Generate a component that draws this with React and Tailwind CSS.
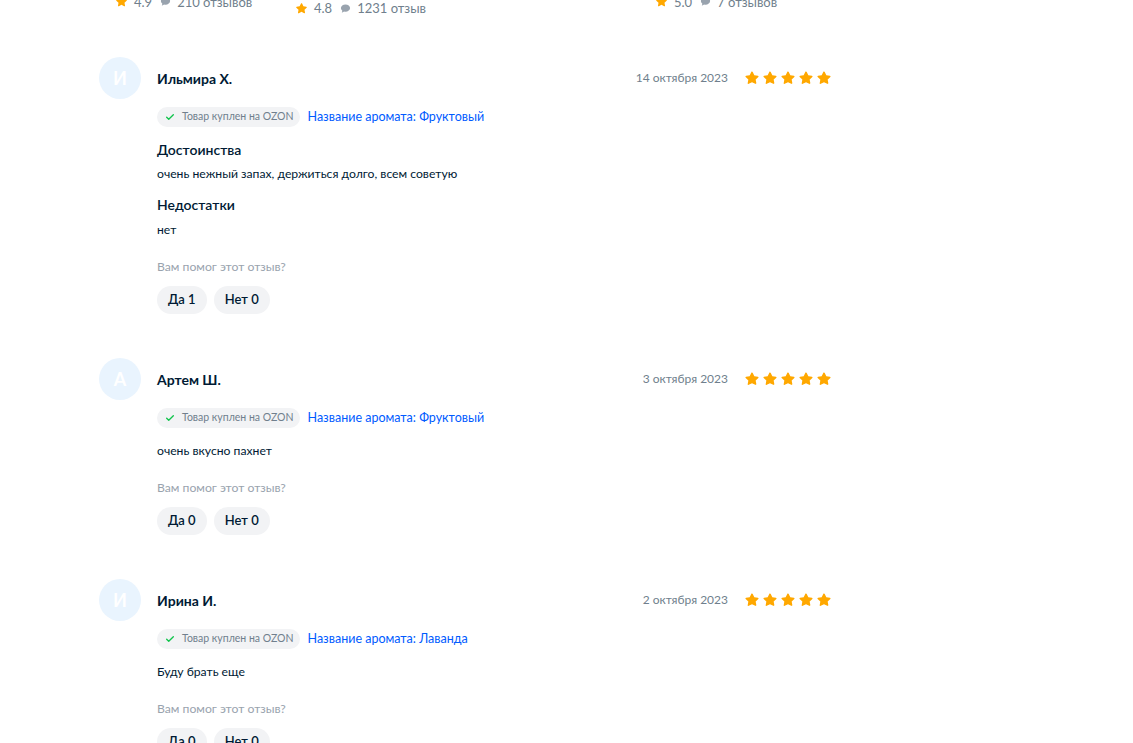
import React from 'react';

const Star = ({ size = 16 }) => (
  <svg width={size} height={size} viewBox="0 0 24 24" className="shrink-0">
    <path
      d="M12 2.2c.5 0 .9.3 1.1.7l2.4 5 5.4.7c.9.1 1.3 1.2.6 1.8l-4 3.8 1 5.4c.2.9-.8 1.6-1.6 1.1L12 18.2l-4.9 2.6c-.8.4-1.8-.2-1.6-1.1l1-5.4-4-3.8c-.7-.6-.3-1.7.6-1.8l5.4-.7 2.4-5c.2-.5.6-.7 1.1-.7z"
      fill="#ffa800"
    />
  </svg>
);

const Bubble = () => (
  <svg width="11" height="11" viewBox="0 0 24 24" className="shrink-0">
    <path d="M12 3C6.5 3 2 6.6 2 11c0 2.3 1.2 4.3 3.1 5.8L4 21l5-2.4c1 .3 2 .4 3 .4 5.5 0 10-3.6 10-8s-4.5-8-10-8z" fill="#99a3ae" />
  </svg>
);

const Check = () => (
  <svg width="10" height="10" viewBox="0 0 24 24" className="shrink-0">
    <path d="M4 12.5l5 5L20 6.5" fill="none" stroke="#10c44c" strokeWidth="3.2" strokeLinecap="round" strokeLinejoin="round" />
  </svg>
);

function CardRating({ rating, count, className }) {
  return (
    <div className={`flex items-center gap-1.5 text-[13px] leading-4 text-[#707f8d] ${className}`}>
      <Star size={13} />
      <span>{rating}</span>
      <span className="ml-0.5"><Bubble /></span>
      <span>{count}</span>
    </div>
  );
}

const reviews = [
  {
    letter: 'И',
    name: 'Ильмира Х.',
    date: '14 октября 2023',
    aroma: 'Фруктовый',
    pros: 'очень нежный запах, держиться долго, всем советую',
    cons: 'нет',
    yes: 1,
    no: 0,
  },
  {
    letter: 'А',
    name: 'Артем Ш.',
    date: '3 октября 2023',
    aroma: 'Фруктовый',
    text: 'очень вкусно пахнет',
    yes: 0,
    no: 0,
  },
  {
    letter: 'И',
    name: 'Ирина И.',
    date: '2 октября 2023',
    aroma: 'Лаванда',
    text: 'Буду брать еще',
    yes: 0,
    no: 0,
  },
];

function Review({ r }) {
  return (
    <div className="flex gap-4">
      <div className="w-[42px] h-[42px] rounded-full bg-[#e9f4fe] flex items-center justify-center text-white text-[18px] font-bold shrink-0">
        {r.letter}
      </div>
      <div className="flex-1 min-w-0">
        <div className="h-[42px] flex items-center justify-between">
          <div className="text-[14px] font-bold text-[#001a34]">{r.name}</div>
          <div className="flex items-center gap-4">
            <span className="text-[12px] text-[#707f8d]">{r.date}</span>
            <div className="flex items-center gap-[2px]">
              <Star /><Star /><Star /><Star /><Star />
            </div>
          </div>
        </div>
        <div className="mt-2 flex items-center gap-2">
          <div className="h-5 flex items-center gap-[7px] pl-[8px] pr-[6px] rounded-full bg-[#f2f3f5] text-[10.5px] text-[#707f8d]">
            <Check />
            <span>Товар куплен на OZON</span>
          </div>
          <span className="text-[12.5px] text-[#005bff]">Название аромата: {r.aroma}</span>
        </div>
        {r.pros ? (
          <div className="mt-[13px]">
            <div className="text-[14px] leading-5 font-semibold text-[#001a34]">Достоинства</div>
            <div className="mt-[6px] text-[12.2px] leading-4 text-[#001a34]">{r.pros}</div>
            <div className="mt-[13px] text-[14px] leading-5 font-semibold text-[#001a34]">Недостатки</div>
            <div className="mt-[7px] text-[12.2px] leading-4 text-[#001a34]">{r.cons}</div>
          </div>
        ) : (
          <div className="mt-[15px] text-[12.2px] leading-4 text-[#001a34]">{r.text}</div>
        )}
        <div className="mt-[21px] text-[12.2px] leading-4 text-[#99a3ae]">Вам помог этот отзыв?</div>
        <div className="mt-[11px] flex gap-[7px]">
          <button className="h-[28px] px-[11px] rounded-full bg-[#f2f3f5] text-[13px] font-semibold text-[#001a34]">Да {r.yes}</button>
          <button className="h-[28px] px-[11px] rounded-full bg-[#f2f3f5] text-[13px] font-semibold text-[#001a34]">Нет {r.no}</button>
        </div>
      </div>
    </div>
  );
}

export default function App() {
  return (
    <div className="w-[1133px] h-[743px] overflow-hidden bg-white" style={{ fontFamily: 'Lato, "Noto Sans", sans-serif' }}>
      <div className="grid grid-cols-[180px_180px_180px_180px] pl-[115px] -mt-[13px]">
        <CardRating rating="4.9" count="210 отзывов" />
        <CardRating rating="4.8" count="1231 отзыв" className="mt-[13px]" />
        <div />
        <CardRating rating="5.0" count="7 отзывов" />
      </div>
      <div className="w-[733px] ml-[99px] mt-[41px] flex flex-col gap-[44px]">
        {reviews.map((r, i) => (
          <Review key={i} r={r} />
        ))}
      </div>
    </div>
  );
}
